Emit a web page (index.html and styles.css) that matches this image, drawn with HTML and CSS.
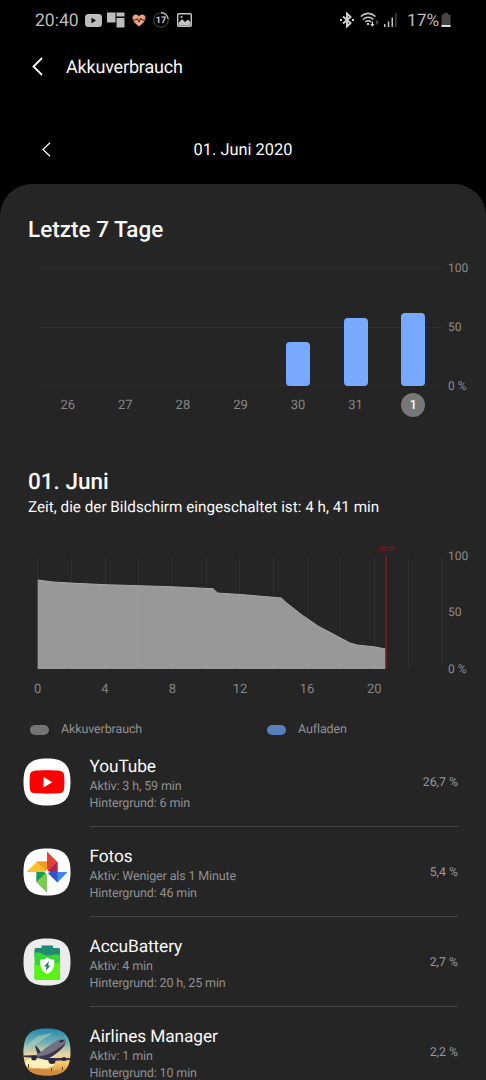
FILE: index.html
```html
<!DOCTYPE html>
<html lang="de">
<head>
    <meta charset="UTF-8">
    <meta name="viewport" content="width=device-width, initial-scale=1.0">
    <title>Akkuverbrauch</title>
    <link rel="stylesheet" href="styles.css">
</head>
<body>
    <div class="status-bar">
        <div class="status-left">
            <span class="clock">20:40</span>
            <svg width="17" height="13" viewBox="0 0 17 13">
                <rect width="17" height="13" rx="3.5" fill="#bdbdbd"/>
                <path d="M6.5 3.8v5.4L11 6.5z" fill="#000"/>
            </svg>
            <svg class="icon-tiles" width="18" height="16" viewBox="0 0 18 16" fill="#bdbdbd">
                <path d="M0 .5h8.500v10H0zM9.500 .5H17.500V4.500H9.500zM9.500 6H17.500V15.500H9.500z"/>
            </svg>
            <svg class="icon-heart" width="14" height="13" viewBox="0 0 14 13">
                <path d="M7 12.500C3 9.500.5 7 .5 4 .5 1.800 2 .5 3.800.5 5.200.5 6.400 1.300 7 2.400 7.600 1.300 8.800.5 10.200.5 12 .5 13.500 1.800 13.500 4c0 3-2.500 5.500-6.500 8.500z" fill="#eba284"/>
                <path d="M0 6h4l1.300-1.500L7 8l1.600-4 1.300 2H14" fill="none" stroke="#3a1c14"/>
            </svg>
            <svg class="icon-count" width="16" height="16" viewBox="0 0 16 16">
                <circle cx="8" cy="8" r="7.300" fill="none" stroke="#4c4c4c"/>
                <path d="M8 .7A7.300 7.300 0 0 1 15.200 7" fill="none" stroke="#c8c8c8" stroke-width="1.200"/>
                <text x="8" y="11.400" text-anchor="middle">17</text>
            </svg>
            <svg class="icon-picture" width="15" height="14" viewBox="0 0 15 14">
                <rect x=".7" y=".7" width="13.600" height="12.600" rx="1" fill="none" stroke="#c4c4c4" stroke-width="1.400"/>
                <path d="M1.500 12.500V10L5 6l3 3 3-2.500 2.500 2.500v3.500z" fill="#c4c4c4"/>
                <circle cx="4.500" cy="4" r="1.100" fill="#c4c4c4"/>
            </svg>
        </div>
        <div class="status-right">
            <svg width="14" height="16" viewBox="0 0 14 16">
                <path d="M3 4.500l7.500 6.500L7 14.500v-13L10.500 5 3 11.500" fill="none" stroke="#d0d0d0" stroke-width="1.900"/>
                <path d="M0 7h2v2H0zM12 7h2v2h-2z" fill="#d0d0d0"/>
            </svg>
            <svg class="icon-wifi" width="19" height="16" viewBox="0 0 19 16">
                <g fill="none" stroke="#c8c8c8" stroke-width="1.500">
                    <path d="M.8 4.500Q8 -1.800 15.500 4.500"/>
                    <path d="M3 7.500Q8 3 13.500 7.500"/>
                    <path d="M5.300 10Q8 7.600 11 10"/>
                </g>
                <circle cx="8" cy="12" r="1.200" fill="#c8c8c8"/>
                <path d="M11.700 9.500h1.400V12h1.500l-2.200 2.800L10.200 12h1.500z" fill="#d8d8d8"/>
                <path d="M16.300 12.500V10.500H15l2-2.500 2 2.500h-1.300v2z" fill="#555"/>
            </svg>
            <svg class="icon-signal" width="13" height="14" viewBox="0 0 13 14">
                <path d="M0 11h1.500v3H0zM3.800 8.500h1.500V14H3.800zM7.500 4.500H9V14H7.500z" fill="#c4c4c4"/>
                <path d="M11.200 0h1.500v14h-1.500z" fill="#444"/>
            </svg>
            <span class="percent">17%</span>
            <svg width="10" height="14" viewBox="0 0 10 14">
                <path d="M3 0h4v1.500h2.500V14H.5V1.500H3z" fill="#464646"/>
                <path d="M.5 12h9v2h-9z" fill="#dedede"/>
            </svg>
        </div>
    </div>

    <div class="app-bar">
        <svg width="11" height="19" viewBox="0 0 11 19">
            <path d="M10 1L1.500 9.500 10 18" fill="none" stroke="#fff" stroke-width="1.800"/>
        </svg>
        <h1>Akkuverbrauch</h1>
    </div>

    <div class="date-nav">
        <svg width="9" height="15" viewBox="0 0 9 15">
            <path d="M8 .7L1 7.500l7 6.800" fill="none" stroke="#fff" stroke-width="1.200"/>
        </svg>
        <span>01. Juni 2020</span>
    </div>

    <div class="panel">
        <h2>Letzte 7 Tage</h2>

        <div class="week-chart">
            <div class="week-bars">
                <div></div>
                <div></div>
                <div></div>
                <div></div>
                <div><span class="bar" style="height: 37%"></span></div>
                <div><span class="bar" style="height: 58%"></span></div>
                <div><span class="bar" style="height: 62%"></span></div>
            </div>
            <div class="week-scale">
                <span>100</span>
                <span>50</span>
                <span>0 %</span>
            </div>
            <div class="week-days">
                <span>26</span>
                <span>27</span>
                <span>28</span>
                <span>29</span>
                <span>30</span>
                <span>31</span>
                <span><b class="today">1</b></span>
            </div>
        </div>

        <h2 class="day-title">01. Juni</h2>
        <p class="screen-time">Zeit, die der Bildschirm eingeschaltet ist: 4 h, 41 min</p>

        <svg class="day-chart" width="486" height="164" viewBox="0 536 486 164">
            <path class="area" d="M37.700 580L53 582 75 583.300 105 584.700 170 586.700 213 588.700 217.500 593 243 594.700 281.500 598 286 602.500 302 615 318 626 350 643 357 645 375 647 385.500 649V669H37.700z"/>
            <path class="area-line" d="M37.700 580L53 582 75 583.300 105 584.700 170 586.700 213 588.700 217.500 593 243 594.700 281.500 598 286 602.500 302 615 318 626 350 643 357 645 375 647 385.500 649"/>
            <path class="grid" d="M37.500 556v113M71.500 556v113M105.500 556v113M138.500 556v113M172.500 556v113M206.500 556v113M239.500 556v113M273.500 556v113M307.500 556v113M340.500 556v113M374.500 556v113M408.500 556v113M442 556v113"/>
            <path class="now-line" d="M386 556v113"/>
            <text class="now" x="386" y="550.500">Jetzt</text>
            <g class="scale">
                <text x="448" y="560">100</text>
                <text x="448" y="616.300">50</text>
                <text x="448" y="672.500">0 %</text>
            </g>
            <g class="hours">
                <text x="37.700" y="693">0</text>
                <text x="105" y="693">4</text>
                <text x="172.300" y="693">8</text>
                <text x="240" y="693">12</text>
                <text x="307" y="693">16</text>
                <text x="374.300" y="693">20</text>
            </g>
        </svg>

        <div class="legend">
            <div><i class="pill"></i>Akkuverbrauch</div>
            <div><i class="pill charge"></i>Aufladen</div>
        </div>

        <ul class="apps">
            <li>
                <svg class="app-icon" viewBox="0 0 48 48">
                    <path d="M24 .5C41 .5 47.500 7 47.500 24S41 47.500 24 47.500.5 41 .5 24 7 .5 24 .5z" fill="#fff"/>
                    <path d="M24 12.300c6 0 11 .2 13.500.6 2 .4 3.200 1.600 3.500 3.600.6 4.500.6 10.500 0 15-.3 2-1.500 3.200-3.500 3.600-5 .8-22 .8-27 0-2-.4-3.200-1.600-3.500-3.600-.6-4.500-.6-10.500 0-15 .3-2 1.500-3.200 3.500-3.600 2.500-.4 7.500-.6 13.500-.6z" fill="#f00"/>
                    <path d="M20.500 19v10.400l8.800-5.200z" fill="#fff"/>
                </svg>
                <div class="app-info">
                    <h3>YouTube</h3>
                    <p>Aktiv: 3 h, 59 min</p>
                    <p>Hintergrund: 6 min</p>
                </div>
                <span class="share">26,7 %</span>
            </li>
            <li>
                <svg class="app-icon" viewBox="0 0 48 48">
                    <path d="M24 .5C41 .5 47.500 7 47.500 24S41 47.500 24 47.500.5 41 .5 24 7 .5 24 .5z" fill="#fff"/>
                    <path d="M24 3.500L34.500 14V24H24z" fill="#db4437"/>
                    <path d="M24 24L34.500 14V24z" fill="#a8265e"/>
                    <path d="M44.500 24L34.500 34.500L24 24z" fill="#4285f4"/>
                    <path d="M24 24h10.500v10.500z" fill="#2a56c6"/>
                    <path d="M24 44.500L13.500 34V24H24z" fill="#5bb974"/>
                    <path d="M24 24L13.500 34V24z" fill="#0f9d58"/>
                    <path d="M24 44.500V24L13.500 34z" fill="#7ccb4a"/>
                    <path d="M3.500 24l10.500-10.500h10V24z" fill="#fbc02d"/>
                    <path d="M24 24L14 13.500h10z" fill="#f29a21"/>
                    <path d="M24 20.500l.9 2.600 2.600.9-2.600.9-.9 2.600-.9-2.600-2.600-.9 2.600-.9z" fill="#fff"/>
                </svg>
                <div class="app-info">
                    <h3>Fotos</h3>
                    <p>Aktiv: Weniger als 1 Minute</p>
                    <p>Hintergrund: 46 min</p>
                </div>
                <span class="share">5,4 %</span>
            </li>
            <li>
                <svg class="app-icon" viewBox="0 0 48 48">
                    <path d="M24 .5C41 .5 47.500 7 47.500 24S41 47.500 24 47.500.5 41 .5 24 7 .5 24 .5z" fill="#ececec"/>
                    <path d="M18.500 7.500h11.500v2.500h5.500q1.500 0 1.500 1.500v8H11.500v-8q0-1.500 1.500-1.500h5.500z" fill="#218a72"/>
                    <path d="M11.500 15c5-3 9 3.500 15 2.500 5-.8 6-2 10.500-.5v23q0 2-2 2H13.500q-2 0-2-2z" fill="#35d631"/>
                    <path d="M11.500 26c6 4 12-2 17-1 4 1 6 1 8.500-1v16q0 2-2 2H13.500q-2 0-2-2z" fill="#58f514"/>
                    <path d="M24.300 19.500c2.500 1.700 4.500 2 7 2.200.4 7-1 11.500-7 14.300-6-2.800-7.400-7.300-7-14.300 2.500-.2 4.500-.5 7-2.200z" fill="#fff"/>
                    <path d="M26 23l-5 5.500h2.500L22.500 33l5-5.500H25z" fill="#148268"/>
                </svg>
                <div class="app-info">
                    <h3>AccuBattery</h3>
                    <p>Aktiv: 4 min</p>
                    <p>Hintergrund: 20 h, 25 min</p>
                </div>
                <span class="share">2,7 %</span>
            </li>
            <li>
                <svg class="app-icon" viewBox="0 0 48 48">
                    <defs>
                        <linearGradient id="sky" x1="0" y1="0" x2="0" y2="1">
                            <stop offset="0" stop-color="#1d86ae"/>
                            <stop offset=".3" stop-color="#6fb0b4"/>
                            <stop offset=".55" stop-color="#ead7a2"/>
                            <stop offset=".75" stop-color="#f9c465"/>
                            <stop offset="1" stop-color="#b8752f"/>
                        </linearGradient>
                        <clipPath id="squircle">
                            <path d="M24 .5C41 .5 47.500 7 47.500 24S41 47.500 24 47.500.5 41 .5 24 7 .5 24 .5z"/>
                        </clipPath>
                    </defs>
                    <g clip-path="url(#squircle)">
                        <rect width="48" height="48" fill="url(#sky)"/>
                        <path d="M0 20L15 8l15-3L12 17 0 27z" fill="#b6ccb9" opacity=".6"/>
                        <ellipse cx="17" cy="35" rx="15" ry="6" fill="#fff0bd"/>
                        <path d="M0 43q14-5 25-1t23-1v9H0z" fill="#d3893b"/>
                        <path d="M12 18l2 .5 5 7-4 2zM0 27.500l16-.5 10 3L48 30v2L28 33 14 30 0 29z" fill="#343449"/>
                        <path d="M13 27C20 23 28 15 36 11.500c4-1.500 7-1 7 1.500 0 4-5 8-11 12.500-4 3-8 5.500-11 5.500-4 0-7-2-8-4z" fill="#747184"/>
                        <path d="M15 28c10 1 20-7 27.500-13-1 4-7 9-12 12.500-7 5-12 4.500-15.500.5z" fill="#39364c"/>
                        <path d="M37 12.500l4-.5-1 2-4 .5z" fill="#242b3e"/>
                        <ellipse cx="11" cy="30" rx="2.700" ry="2.500" fill="#27283a"/>
                        <ellipse cx="29" cy="33" rx="3.500" ry="3" fill="#28293c"/>
                        <ellipse cx="41" cy="31" rx="2.300" ry="2" fill="#28293c"/>
                        <path d="M5 36h1v4H5zM28 40h1v3h-1zM39 39h1v3h-1z" fill="#664128"/>
                    </g>
                </svg>
                <div class="app-info">
                    <h3>Airlines Manager</h3>
                    <p>Aktiv: 1 min</p>
                    <p>Hintergrund: 10 min</p>
                </div>
                <span class="share">2,2 %</span>
            </li>
        </ul>
    </div>
</body>
</html>
```
FILE: styles.css
```css
* {
    margin: 0;
    padding: 0;
    box-sizing: border-box;
}

body {
    height: 1080px;
    overflow: hidden;
    display: flex;
    flex-direction: column;
    background: #000;
    color: #fafafa;
    font-family: Roboto, sans-serif;
    text-rendering: geometricPrecision;
}

svg {
    display: block;
    flex-shrink: 0;
}

/* Statusleiste */
.status-bar {
    height: 40px;
    flex-shrink: 0;
    padding: 0 35px;
    display: flex;
    align-items: center;
    justify-content: space-between;
    color: #bdbdbd;
}

.status-left,
.status-right {
    display: flex;
    align-items: center;
}

.clock {
    width: 50px;
    padding-top: 1px;
    font-size: 17.5px;
}

.icon-tiles {
    margin-left: 5px;
}

.icon-heart {
    margin-left: 7px;
}

.icon-count {
    margin-left: 7px;
    fill: #d0d0d0;
    font-size: 9px;
    font-weight: 700;
}

.icon-picture {
    margin-left: 8px;
}

.icon-wifi {
    margin-left: 6px;
}

.icon-signal {
    margin-left: 5px;
}

.percent {
    margin: 0 2px 0 10px;
    padding-top: 1px;
    font-size: 17.2px;
}

/* Kopfzeile */
.app-bar {
    height: 52px;
    flex-shrink: 0;
    padding-left: 32px;
    display: flex;
    align-items: center;
    gap: 23px;
}

h1 {
    padding-top: 2px;
    font-size: 18px;
    font-weight: 400;
    letter-spacing: -0.18px;
}

.date-nav {
    height: 70px;
    margin-top: 22px;
    flex-shrink: 0;
    padding: 0 42px;
    display: grid;
    grid-template-columns: 9px 1fr 9px;
    align-items: center;
    text-align: center;
    font-size: 16.4px;
}

.date-nav span {
    padding-top: 2px;
}

/* Inhalt */
.panel {
    height: 896px;
    flex-shrink: 0;
    padding-top: 32px;
    border-radius: 32px 32px 0 0;
    background: #252525;
}

h2 {
    padding-left: 28px;
    font-size: 22.5px;
    line-height: 28px;
    font-weight: 500;
}

.week-chart {
    margin: 24px 0 0 39px;
    display: grid;
    grid-template-columns: 403px 1fr;
    grid-template-rows: 118px auto;
    column-gap: 6px;
}

.week-bars {
    display: grid;
    grid-template-columns: repeat(7, 1fr);
    background: linear-gradient(#2d2d2d, #2d2d2d) 0 0 / 100% 1px no-repeat,
                linear-gradient(#2d2d2d, #2d2d2d) 0 50% / 100% 1px no-repeat,
                linear-gradient(#2d2d2d, #2d2d2d) 0 100% / 100% 1px no-repeat;
}

.week-bars div {
    display: flex;
    align-items: flex-end;
    justify-content: center;
}

.bar {
    width: 24px;
    border-radius: 4px;
    background: #77a9ff;
}

.week-scale {
    display: flex;
    flex-direction: column;
    justify-content: space-between;
    margin: -8px 0;
    font-size: 12px;
    line-height: 16px;
    color: #8b8b8b;
}

.week-days {
    display: grid;
    grid-template-columns: repeat(7, 1fr);
    justify-items: center;
    margin-top: 7px;
    font-size: 13px;
    line-height: 26px;
    color: #858585;
}

.today {
    display: block;
    width: 24px;
    height: 24px;
    border-radius: 50%;
    background: #777;
    color: #fff;
    font-weight: 500;
    text-align: center;
}

.day-title {
    margin-top: 49px;
}

.screen-time {
    padding-left: 28px;
    font-size: 15.25px;
    line-height: 22px;
}

/* Tagesverlauf */
.day-chart {
    margin-top: 18px;
    font-size: 12px;
}

.area {
    fill: #989898;
}

.area-line {
    fill: none;
    stroke: #aaa;
}

.grid {
    stroke: #fff;
    stroke-opacity: 0.035;
}

.now-line {
    stroke: #8f1c28;
    stroke-width: 1.3;
}

.now {
    fill: #8c1523;
    font-size: 8px;
    text-anchor: middle;
}

.scale {
    fill: #8b8b8b;
}

.hours {
    fill: #858585;
    font-size: 13px;
    text-anchor: middle;
}

.legend {
    height: 16px;
    margin-top: 21px;
    padding-left: 30px;
    display: grid;
    grid-template-columns: 237px 1fr;
    align-items: center;
    font-size: 12.5px;
    letter-spacing: -0.12px;
    line-height: 17px;
    color: #909090;
}

.legend div {
    display: flex;
    align-items: center;
    gap: 12px;
}

.pill {
    width: 19px;
    height: 10px;
    border-radius: 5px;
    background: #747474;
}

.charge {
    background: #587fbd;
}

/* App-Liste */
.apps {
    list-style: none;
}

.apps li {
    height: 90px;
    padding: 0 28px 0 23px;
    display: grid;
    grid-template-columns: 48px 1fr auto;
    column-gap: 18.5px;
}

.app-icon {
    width: 48px;
    height: 48px;
    margin-top: 21px;
}

.app-info {
    grid-column: 2 / 4;
    grid-row: 1;
    padding-top: 20px;
    border-bottom: 1px solid #454545;
}

h3 {
    font-size: 17.3px;
    line-height: 21px;
    font-weight: 400;
    letter-spacing: -0.1px;
}

.app-info p {
    font-size: 12.5px;
    line-height: 17px;
    letter-spacing: -0.14px;
    color: #909090;
}

.share {
    grid-column: 3;
    grid-row: 1;
    margin-top: 38px;
    font-size: 12.3px;
    line-height: 16px;
    color: #999;
}
```
